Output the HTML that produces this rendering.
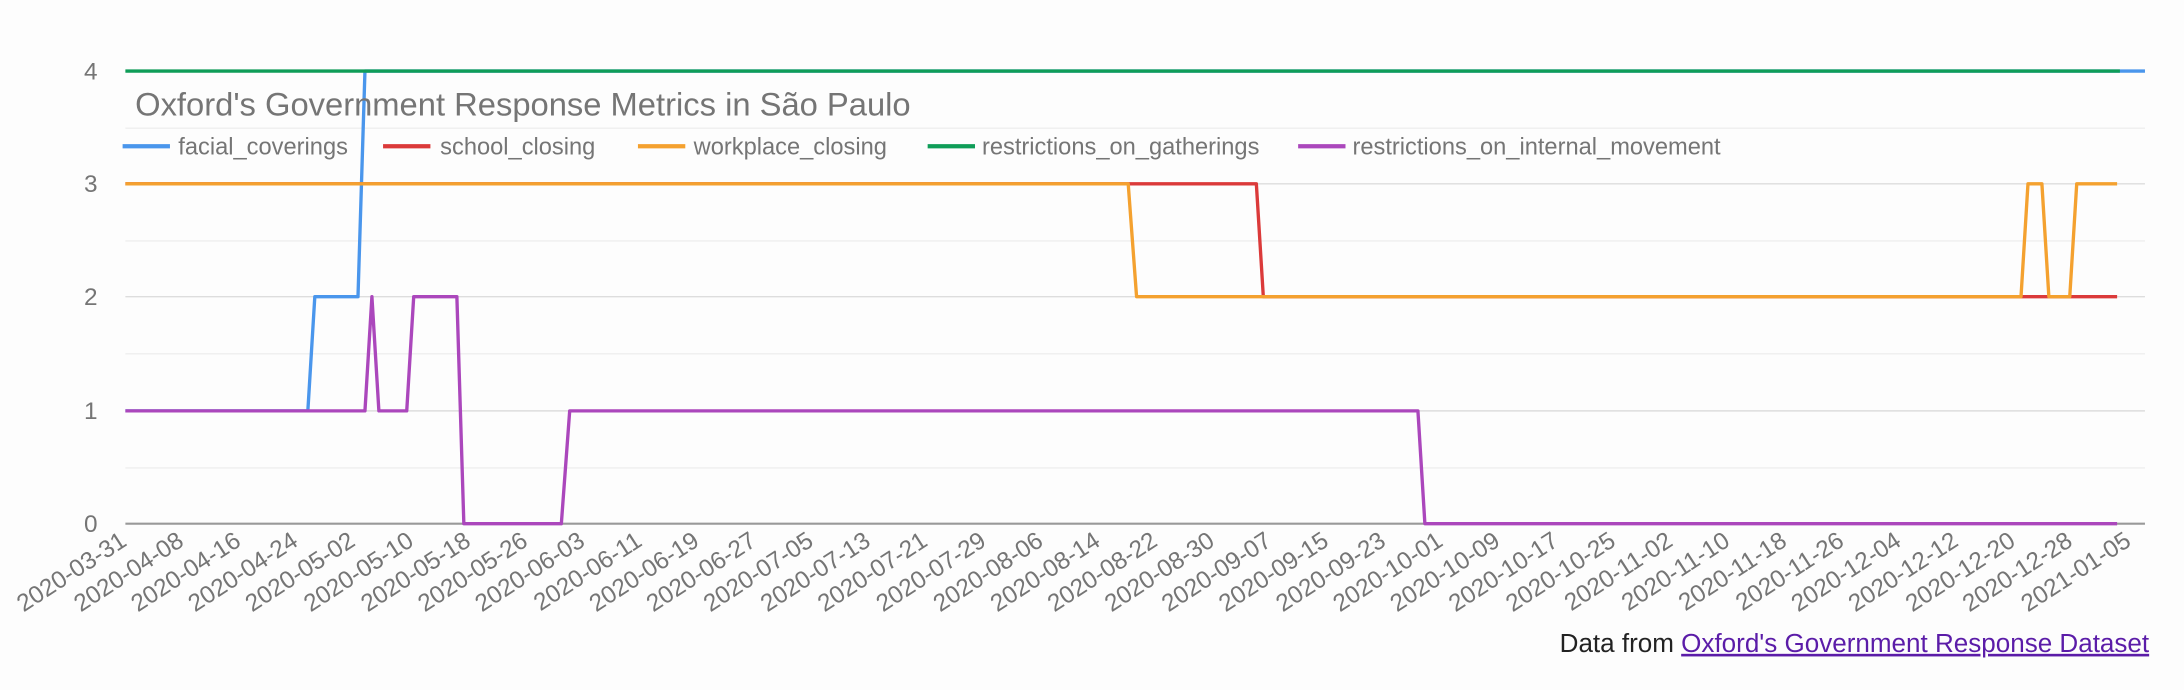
<!DOCTYPE html>
<html><head><meta charset="utf-8"><style>
html,body{margin:0;padding:0;background:#fdfdfd;}
svg{display:block;font-family:"Liberation Sans",sans-serif;}
</style></head><body>
<svg width="2184" height="690" viewBox="0 0 1568 495.4" xmlns="http://www.w3.org/2000/svg">
<rect width="1568" height="496" fill="#fdfdfd"/>
<g stroke="#eeeeee" stroke-width="1">
<line x1="90" y1="92" x2="1540" y2="92"/><line x1="90" y1="173" x2="1540" y2="173"/>
<line x1="90" y1="254" x2="1540" y2="254"/><line x1="90" y1="336" x2="1540" y2="336"/>
</g>
<g stroke="#dddddd" stroke-width="1">
<line x1="90" y1="51" x2="1540" y2="51"/><line x1="90" y1="132" x2="1540" y2="132"/>
<line x1="90" y1="213" x2="1540" y2="213"/><line x1="90" y1="295" x2="1540" y2="295"/>
</g>
<line x1="90" y1="376" x2="1540" y2="376" stroke="#999" stroke-width="1.5"/>
<g fill="#757575" font-size="17.5" text-anchor="end">
<text x="70" y="57">4</text><text x="70" y="138">3</text><text x="70" y="219">2</text><text x="70" y="301">1</text><text x="70" y="382">0</text>
</g>
<g fill="none" stroke-width="2.4" stroke-linejoin="round">
<polyline stroke="#4a96ec" points="90,295 221,295 226,213 257,213 262,51 1540,51" />
<polyline stroke="#0f9d58" points="90,51 1522,51"/>
<polyline stroke="#db3a3a" points="90,132 902,132 907,213 1520,213"/>
<polyline stroke="#f4a12f" points="90,132 810,132 816,213 1451,213 1456,132 1466,132 1471,213 1486,213 1491,132 1520,132"/>
<polyline stroke="#ab47bc" points="90,295 262,295 267,213 272,295 292,295 297,213 328,213 333,376 403,376 409,295 1018,295 1023,376 1520,376"/>
</g>
<text x="97" y="83" fill="#757575" font-size="23.5">Oxford's Government Response Metrics in São Paulo</text>
<g font-size="17" fill="#757575">
<line x1="88" y1="105" x2="122" y2="105" stroke="#4a96ec" stroke-width="3"/><text x="128" y="111">facial_coverings</text>
<line x1="275" y1="105" x2="309" y2="105" stroke="#db3a3a" stroke-width="3"/><text x="316" y="111">school_closing</text>
<line x1="458" y1="105" x2="492" y2="105" stroke="#f4a12f" stroke-width="3"/><text x="498" y="111">workplace_closing</text>
<line x1="666" y1="105" x2="700" y2="105" stroke="#0f9d58" stroke-width="3"/><text x="705" y="111">restrictions_on_gatherings</text>
<line x1="932" y1="105" x2="966" y2="105" stroke="#ab47bc" stroke-width="3"/><text x="971" y="111">restrictions_on_internal_movement</text>
</g>
<g fill="#757575" font-size="17.5" text-anchor="end">
<text transform="translate(92,391) rotate(-33)">2020-03-31</text>
<text transform="translate(133,391) rotate(-33)">2020-04-08</text>
<text transform="translate(174,391) rotate(-33)">2020-04-16</text>
<text transform="translate(215,391) rotate(-33)">2020-04-24</text>
<text transform="translate(256,391) rotate(-33)">2020-05-02</text>
<text transform="translate(298,391) rotate(-33)">2020-05-10</text>
<text transform="translate(339,391) rotate(-33)">2020-05-18</text>
<text transform="translate(380,391) rotate(-33)">2020-05-26</text>
<text transform="translate(421,391) rotate(-33)">2020-06-03</text>
<text transform="translate(462,391) rotate(-33)">2020-06-11</text>
<text transform="translate(503,391) rotate(-33)">2020-06-19</text>
<text transform="translate(544,391) rotate(-33)">2020-06-27</text>
<text transform="translate(585,391) rotate(-33)">2020-07-05</text>
<text transform="translate(626,391) rotate(-33)">2020-07-13</text>
<text transform="translate(667,391) rotate(-33)">2020-07-21</text>
<text transform="translate(709,391) rotate(-33)">2020-07-29</text>
<text transform="translate(750,391) rotate(-33)">2020-08-06</text>
<text transform="translate(791,391) rotate(-33)">2020-08-14</text>
<text transform="translate(832,391) rotate(-33)">2020-08-22</text>
<text transform="translate(873,391) rotate(-33)">2020-08-30</text>
<text transform="translate(914,391) rotate(-33)">2020-09-07</text>
<text transform="translate(955,391) rotate(-33)">2020-09-15</text>
<text transform="translate(996,391) rotate(-33)">2020-09-23</text>
<text transform="translate(1037,391) rotate(-33)">2020-10-01</text>
<text transform="translate(1078,391) rotate(-33)">2020-10-09</text>
<text transform="translate(1120,391) rotate(-33)">2020-10-17</text>
<text transform="translate(1161,391) rotate(-33)">2020-10-25</text>
<text transform="translate(1202,391) rotate(-33)">2020-11-02</text>
<text transform="translate(1243,391) rotate(-33)">2020-11-10</text>
<text transform="translate(1284,391) rotate(-33)">2020-11-18</text>
<text transform="translate(1325,391) rotate(-33)">2020-11-26</text>
<text transform="translate(1366,391) rotate(-33)">2020-12-04</text>
<text transform="translate(1407,391) rotate(-33)">2020-12-12</text>
<text transform="translate(1448,391) rotate(-33)">2020-12-20</text>
<text transform="translate(1489,391) rotate(-33)">2020-12-28</text>
<text transform="translate(1531,391) rotate(-33)">2021-01-05</text>
</g>
<text x="1543" y="468" text-anchor="end" font-size="18.7" fill="#222">Data from <tspan fill="#5b1ca8" text-decoration="underline">Oxford's Government Response Dataset</tspan></text>
</svg>
</body></html>
